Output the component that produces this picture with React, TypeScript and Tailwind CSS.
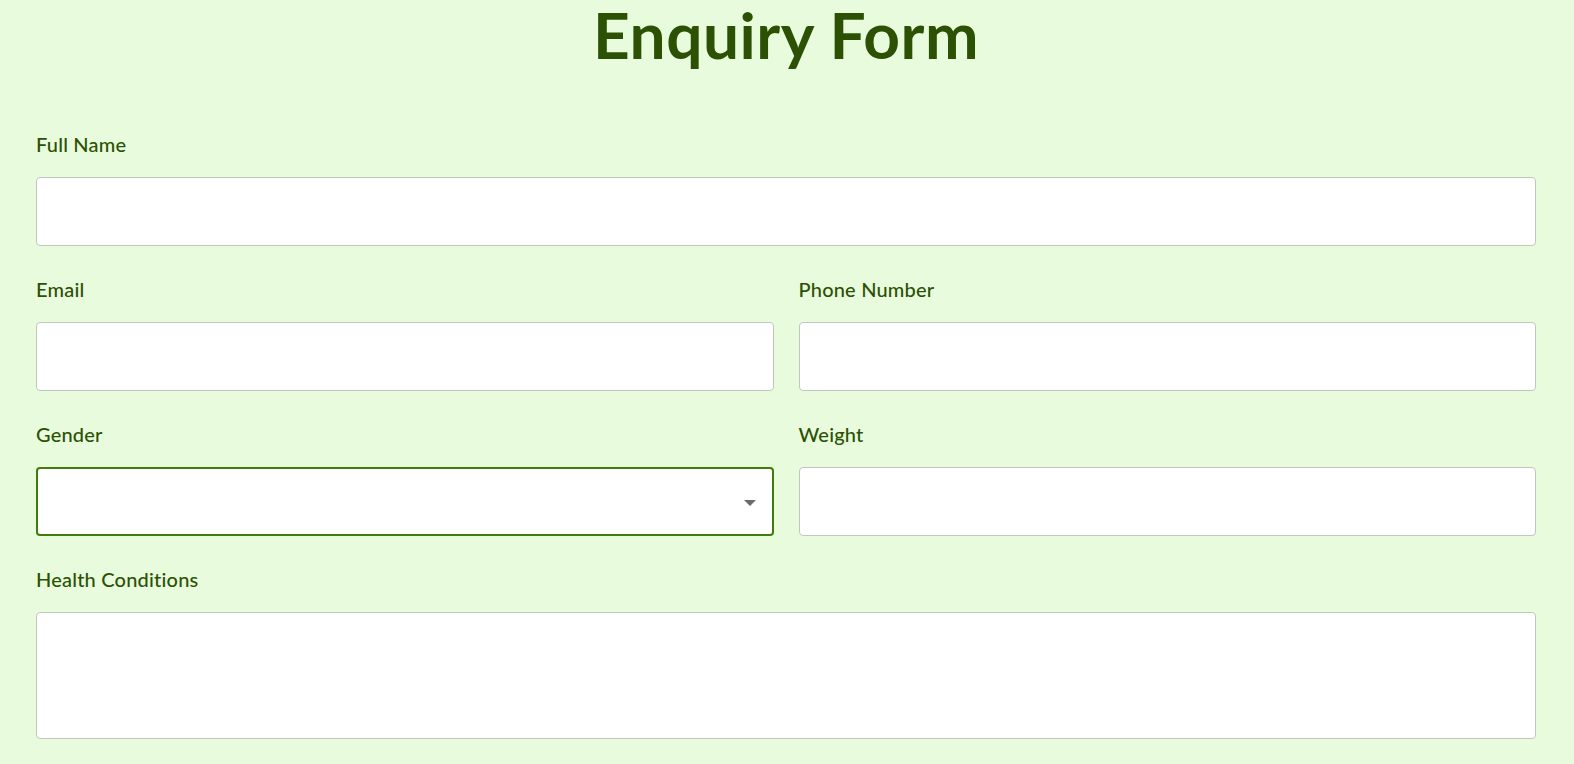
import { useState } from 'react';

function Label({ children }: { children: React.ReactNode }) {
  return (
    <label className="block text-[20px] leading-[28px] font-medium tracking-[0.2px] text-[#2c5104] mb-[19px]">
      {children}
    </label>
  );
}

const inputCls =
  'block w-full h-[69px] bg-white border border-[#c2c7bd] rounded-[4px] px-4 text-[18px] outline-none';

export default function App() {
  const [gender, setGender] = useState('');

  return (
    <div className="min-h-screen bg-[#e8fcdd] pl-[36px] pr-[38px] pt-px font-['Lato',sans-serif] text-[#2c5104]">
      <h1 className="text-center text-[64px] leading-[76px] font-bold tracking-[0.5px] -mt-[4px] mb-[57px]">Enquiry Form</h1>

      <form className="flex flex-col gap-[29px]">
        {/* Full name */}
        <div>
          <Label>Full Name</Label>
          <input type="text" className={inputCls} />
        </div>

        <div className="grid grid-cols-2 gap-x-[25px]">
          <div>
            <Label>Email</Label>
            <input type="email" className={inputCls} />
          </div>
          <div>
            <Label>Phone Number</Label>
            <input type="tel" className={inputCls} />
          </div>
        </div>

        <div className="grid grid-cols-2 gap-x-[25px]">
          <div>
            <Label>Gender</Label>
            {/* focused select */}
            <div className="relative">
              <select
                value={gender}
                onChange={(e) => setGender(e.target.value)}
                className="block w-full h-[69px] appearance-none bg-white border-2 border-[#3f7c0b] rounded-[4px] px-4 text-[18px] outline-none"
              >
                <option value=""></option>
                <option value="male">Male</option>
                <option value="female">Female</option>
              </select>
              <span className="pointer-events-none absolute right-[18px] top-[33px] w-0 h-0 border-l-[6px] border-r-[6px] border-t-[6px] border-l-transparent border-r-transparent border-t-[#6b6b6b]" />
            </div>
          </div>
          <div>
            <Label>Weight</Label>
            <input type="text" className={inputCls} />
          </div>
        </div>

        <div>
          <Label>Health Conditions</Label>
          <textarea className="block w-full h-[127px] bg-white border border-[#c2c7bd] rounded-[4px] px-4 py-3 text-[18px] outline-none resize-none" />
        </div>
      </form>
    </div>
  );
}
